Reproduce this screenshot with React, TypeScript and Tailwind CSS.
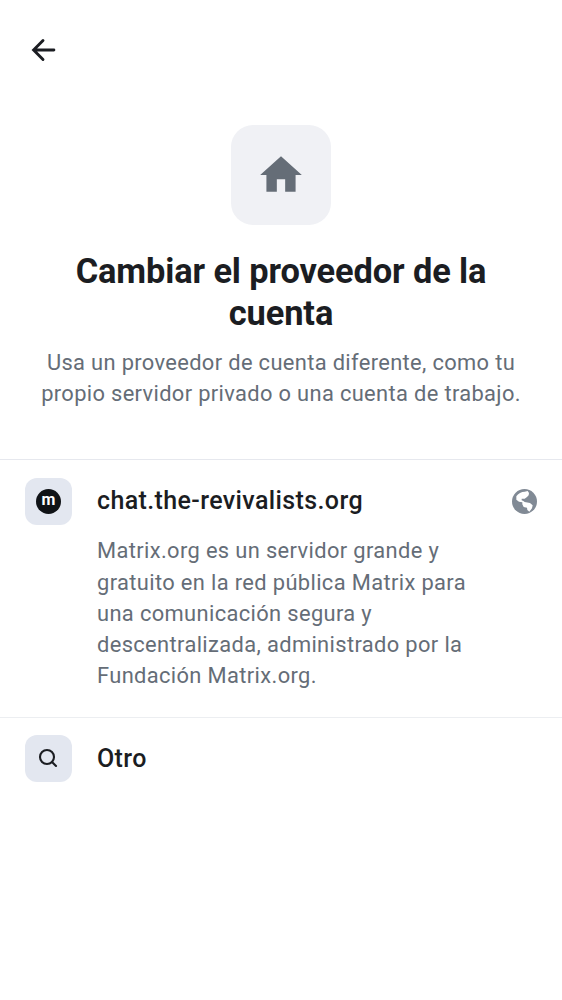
import React from "react";

export default function App() {
  return (
    <main className="min-h-[1000px] w-[562px] overflow-hidden bg-white font-['Roboto',sans-serif] text-[#1b1d22]">
      <header className="flex h-[125px] items-start pl-[31px] pt-[37px]">
        <button aria-label="Atrás">
          <svg width="25" height="25" viewBox="0 0 25 25" fill="none" stroke="currentColor" strokeWidth="2.9" strokeLinecap="round">
            <path d="M22.9 13H3M12 3.5L2.6 13L12 22.5" />
          </svg>
        </button>
      </header>
      <section className="flex flex-col items-center text-center">
        <div className="flex h-[100px] w-[100px] items-center justify-center rounded-[22px] bg-[#f0f1f5]">
          <svg width="50" height="50" viewBox="0 0 24 24" fill="#656d77">
            <path d="M10 20v-6h4v6h5v-8h3L12 3 2 12h3v8z" />
          </svg>
        </div>
        <h1 className="mt-[25px] text-[34.4px] font-bold leading-[42px] tracking-[-0.12px]">
          Cambiar el proveedor de la<br />cuenta
        </h1>
        <p className="mt-[13px] text-[21.875px] leading-[31.25px] tracking-[0.35px] text-[#656d77]">
          Usa un proveedor de cuenta diferente, como tu<br />propio servidor privado o una cuenta de trabajo.
        </p>
      </section>
      <section className="mt-[49.5px] h-[257.5px] border-t border-[#e6e8ee] px-[25px] pt-[17.5px]">
        <div className="flex h-[47px] items-center">
          <div className="flex h-[47px] w-[47px] items-center justify-center rounded-[12px] bg-[#e3e7f0]">
            <div className="flex h-[25px] w-[25px] items-center justify-center rounded-full bg-[#101317] pb-[2px] text-[16px] font-bold leading-none text-white">m</div>
          </div>
          <h2 className="ml-[25px] grow text-[25px] font-medium leading-[38px] tracking-[0.38px]">chat.the-revivalists.org</h2>
          <svg className="shrink-0" width="25" height="25" viewBox="0 0 75 75">
            <circle cx="37.5" cy="37.5" r="37.5" fill="#818a95" />
            <path fill="#fff" d="M13 22C18 13 29 8 38 8L47 6L51 12L50 19L45 24L38 29L29 29L29 34L34 36L38 39L54 42L62 49L60 58L52 68L46 63L45 56L35 54L31 46L31 40L21 38L13 32Z" />
          </svg>
        </div>
        <p className="ml-[72px] mt-[10.8px] text-[21.875px] leading-[31.25px] tracking-[0.37px] text-[#656d77]">
          Matrix.org es un servidor grande y<br />gratuito en la red pública Matrix para<br />una comunicación segura y<br />descentralizada, administrado por la<br />Fundación Matrix.org.
        </p>
      </section>
      <section className="flex border-t border-[#eceef1] px-[25px] pt-[17.5px]">
        <div className="flex h-[47px] w-[47px] items-center justify-center rounded-[12px] bg-[#e3e7f0]">
          <svg width="25" height="25" viewBox="0 0 25 25" fill="none" stroke="currentColor" strokeWidth="2.1" strokeLinecap="round"><circle cx="11" cy="11" r="7" /><path d="m16 16 4 4" /></svg>
        </div>
        <h2 className="ml-[25px] flex h-[47px] items-center text-[25px] font-medium leading-[38px] tracking-[0.38px]">Otro</h2>
      </section>
    </main>
  );
}
